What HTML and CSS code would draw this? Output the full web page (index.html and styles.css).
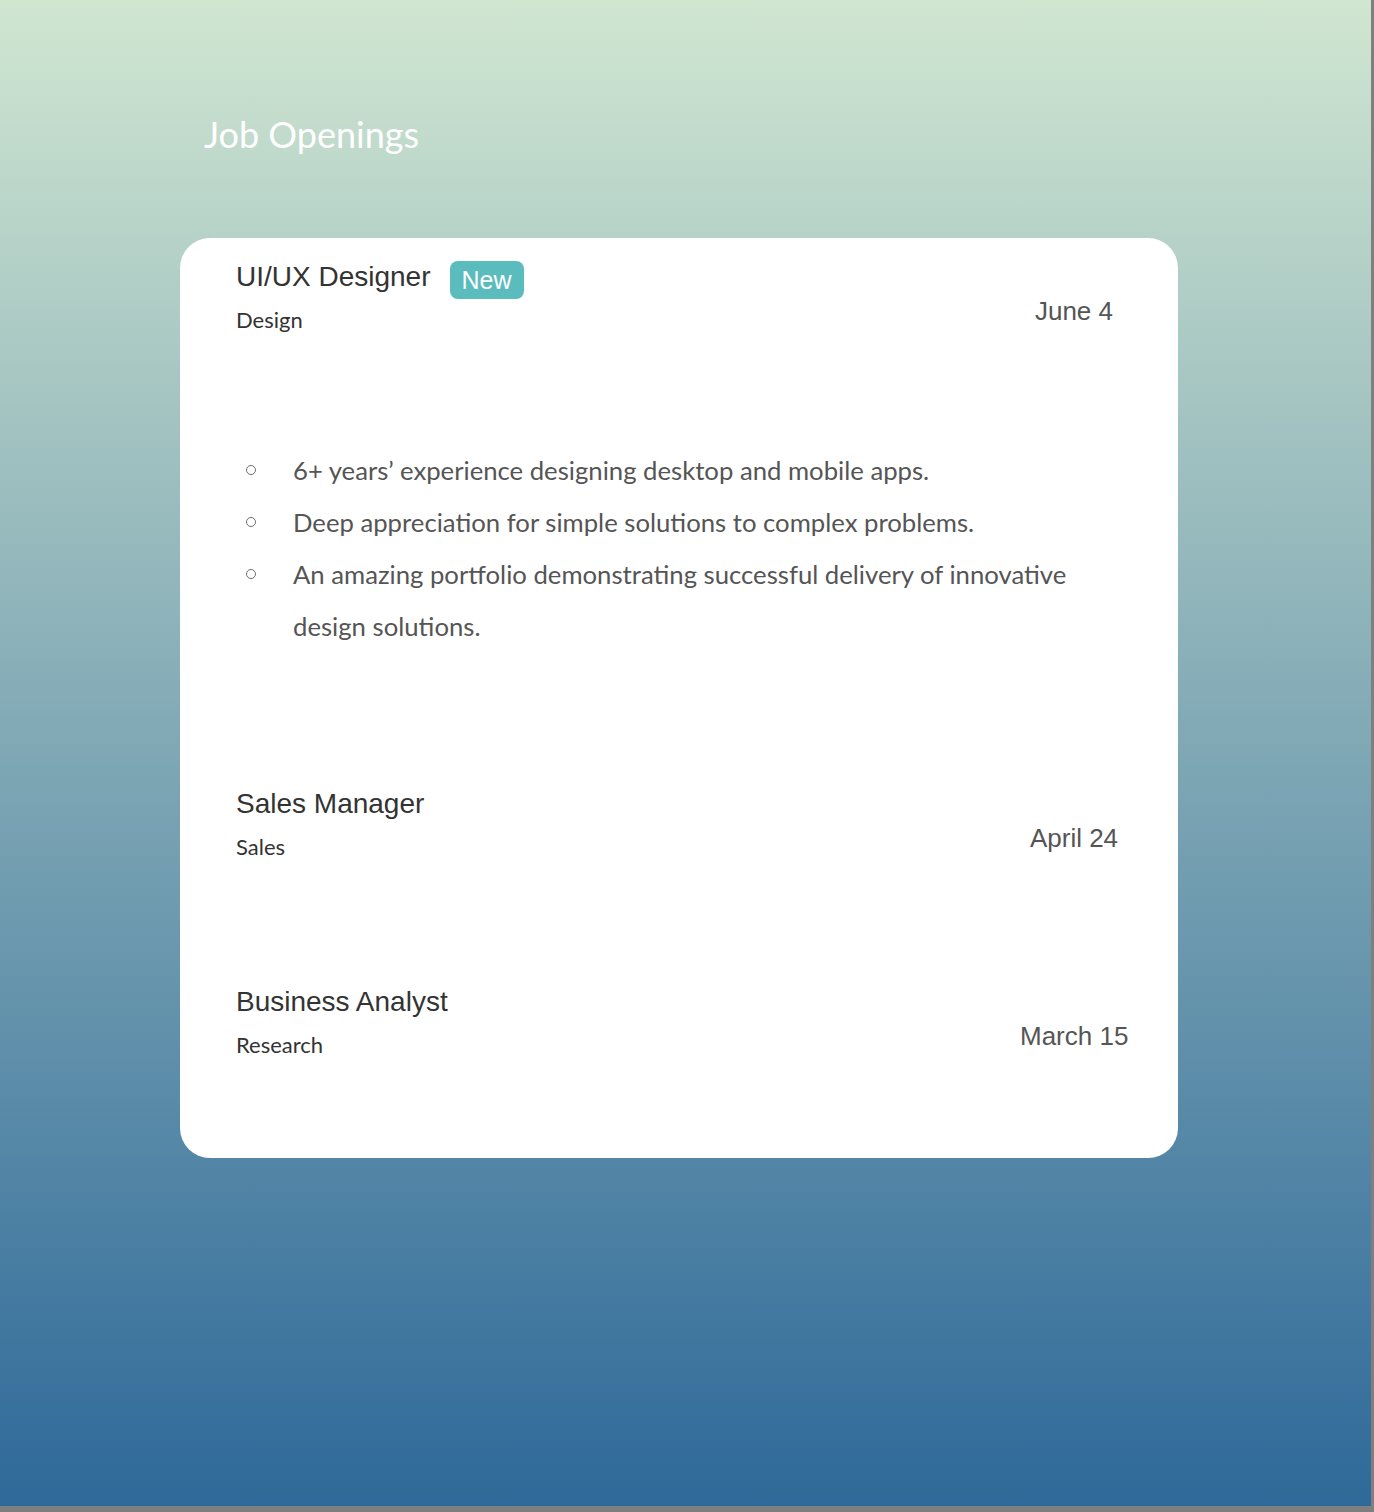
FILE: index.html
```html
<!DOCTYPE html>
<html lang="en">
<head>
<meta charset="utf-8">
<title>Job Openings</title>
<link rel="stylesheet" href="styles.css">
</head>
<body>
<div class="page">
  <h1 class="page-title">Job Openings</h1>
  <section class="card">
    <article class="job job-open">
      <div class="job-head">
        <div class="job-info">
          <div class="job-title-row">
            <h2 class="job-title">UI/UX Designer</h2>
            <span class="badge">New</span>
          </div>
          <div class="job-dept">Design</div>
        </div>
        <div class="job-date">June 4</div>
      </div>
      <ul class="job-reqs">
        <li>6+ years’ experience designing desktop and mobile apps.</li>
        <li>Deep appreciation for simple solutions to complex problems.</li>
        <li>An amazing portfolio demonstrating successful delivery of innovative design solutions.</li>
      </ul>
    </article>
    <article class="job">
      <div class="job-head">
        <div class="job-info">
          <div class="job-title-row">
            <h2 class="job-title">Sales Manager</h2>
          </div>
          <div class="job-dept">Sales</div>
        </div>
        <div class="job-date">April 24</div>
      </div>
    </article>
    <article class="job">
      <div class="job-head">
        <div class="job-info">
          <div class="job-title-row">
            <h2 class="job-title">Business Analyst</h2>
          </div>
          <div class="job-dept">Research</div>
        </div>
        <div class="job-date">March 15</div>
      </div>
    </article>
  </section>
</div>
</body>
</html>
```

FILE: styles.css
```css
html {
  background: #7f7f7f;
}
body {
  margin: 0;
}
.page {
  width: 1371px;
  height: 1506px;
  box-sizing: border-box;
  padding: 113px 0 0 180px;
  background: linear-gradient(180deg, #d0e6d1 0%, #2e6999 100%);
  font-family: "Lato", "Liberation Sans", sans-serif;
}
.page-title {
  margin: 0 0 83px 24px;
  font-family: "Lato", sans-serif;
  font-weight: 400;
  font-size: 36px;
  line-height: 42px;
  color: #ffffff;
}
.card {
  width: 998px;
  height: 920px;
  box-sizing: border-box;
  padding: 23px 50px 0 56px;
  background: #ffffff;
  border-radius: 30px;
}
.job {
  margin-bottom: 127px;
}
.job-head {
  display: flex;
  justify-content: space-between;
  align-items: flex-start;
}
.job-title-row {
  display: flex;
  align-items: center;
  height: 32px;
}
.job-title {
  margin: 0;
  font-family: "Liberation Sans", Arial, sans-serif;
  font-weight: 400;
  font-size: 28px;
  line-height: 32px;
  color: #333333;
}
.badge {
  margin-left: 19px;
  padding: 0 12px;
  height: 38px;
  line-height: 38px;
  margin-top: 6px;
  border-radius: 8px;
  background: #5bbcbd;
  color: #ffffff;
  font-family: "Liberation Sans", Arial, sans-serif;
  font-size: 25px;
}
.job-dept {
  margin-top: 15px;
  font-family: "Lato", sans-serif;
  font-size: 22px;
  line-height: 24px;
  color: #333333;
}
.job-date {
  flex: none;
  width: 108px;
  margin-top: 34px;
  white-space: nowrap;
  text-align: center;
  font-family: "Liberation Sans", Arial, sans-serif;
  font-size: 26px;
  line-height: 32px;
  color: #555555;
}
.job-reqs {
  list-style: none;
  margin: 112px 0 136px;
  padding: 0 0 0 10px;
}
.job-open {
  margin-bottom: 0;
}
.job-reqs li {
  display: flex;
  font-family: "Lato", sans-serif;
  font-size: 25.7px;
  line-height: 52px;
  color: #555555;
}
.job-reqs li::before {
  content: "";
  flex: none;
  width: 8px;
  height: 8px;
  margin: 21px 37px 0 0;
  border: 1.5px solid #707070;
  border-radius: 50%;
}
```
